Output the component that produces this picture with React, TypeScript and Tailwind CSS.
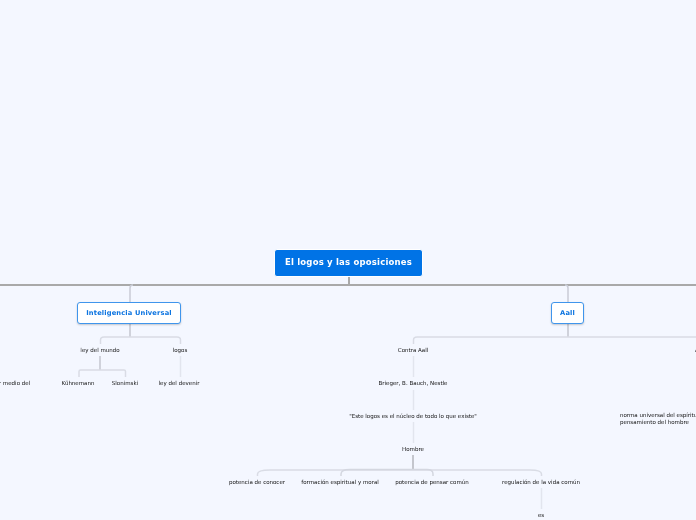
const font = "font-['DejaVu_Sans',Verdana,sans-serif]";

const labels = [
  { text: "ley del mundo", pos: "left-[100px] top-[350px]" },
  { text: "logos", pos: "left-[180px] top-[350px]" },
  { text: "Kühnemann", pos: "left-[78px] top-[383px]" },
  { text: "Slonimski", pos: "left-[125px] top-[383px]" },
  { text: "ley del devenir", pos: "left-[179px] top-[383px]" },
  { text: "Contra Aall", pos: "left-[412.5px] top-[350px]" },
  { text: "Brieger, B. Bauch, Nestle", pos: "left-[413px] top-[383px]" },
  { text: "\"Este logos es el núcleo de todo lo que existe\"", pos: "left-[413px] top-[416px]" },
  { text: "Hombre", pos: "left-[412.5px] top-[449px]" },
  { text: "potencia de conocer", pos: "left-[256.5px] top-[482px]" },
  { text: "formación espiritual y moral", pos: "left-[340px] top-[482px]" },
  { text: "potencia de pensar común", pos: "left-[432px] top-[482px]" },
  { text: "regulación de la vida común", pos: "left-[541px] top-[482px]" },
  { text: "es", pos: "left-[541px] top-[515px]" },
];

function Connectors() {
  return (
    <svg className="absolute inset-0" width="696" height="520" fill="none">
      {/* trunk */}
      <path d="M0 285H696" stroke="#a9a9a9" strokeWidth="2" />
      <path d="M349 276V285" stroke="#a9a9a9" strokeWidth="2" />
      {/* main branches */}
      <path d="M133 285Q130 285 130 288V303" stroke="#c9ccd6" strokeWidth="1.5" />
      <path d="M565 285Q568 285 568 288V303" stroke="#c9ccd6" strokeWidth="1.5" />
      <path d="M130 323V337M568 323V337M100 356V370" stroke="#c3c6d0" strokeWidth="1.5" />
      {/* Inteligencia Universal */}
      <path d="M100.5 344V340Q100.5 337 104 337H177Q180.5 337 180.5 340V344" stroke="#d9dce5" strokeWidth="1.5" />
      <path d="M79 377V371.5Q79 370 80.5 370H124Q125.5 370 125.5 371.5V377" stroke="#d9dce5" strokeWidth="1.5" />
      <path d="M180.5 356V377" stroke="#e2e5ee" strokeWidth="1.5" />
      {/* Aall */}
      <path d="M413.5 344V340Q413.5 337 417 337H696" stroke="#d9dce5" strokeWidth="1.5" />
      <path d="M413.5 356V377M413.5 390V410M413.5 422V443" stroke="#e2e5ee" strokeWidth="1.5" />
      <path d="M413 455V469" stroke="#b4b6bd" strokeWidth="1.5" />
      <path d="M257.5 476V474Q257.5 470 270 470H530Q541.5 470 541.5 474V476" stroke="#d9dce5" strokeWidth="1.5" />
      <path d="M341 476V474Q341 469.5 350 469.5H427Q433 469.5 433 474V476" stroke="#d4d7e0" strokeWidth="1.5" />
      <path d="M541.5 488V509" stroke="#e2e5ee" strokeWidth="1.5" />
    </svg>
  );
}

export default function App() {
  return (
    <div className={`relative w-[696px] h-[520px] overflow-hidden bg-[#f4f7ff] ${font}`}>
      <Connectors />

      <div className="absolute left-[274px] top-[249px] w-[149px] h-[27.5px] flex items-center justify-center rounded-[3px] border border-white bg-[#0073e6] text-[8.5px] tracking-[0.2px] font-bold text-white whitespace-nowrap [will-change:transform]">
        El logos y las oposiciones
      </div>

      <div className="absolute left-[77px] top-[302px] w-[104px] h-[21.5px] flex items-center justify-center rounded-[3px] border-[1.5px] border-[#3f95ec] bg-white text-[6.7px] tracking-[0.15px] font-bold text-[#0a73e0] whitespace-nowrap shadow-[0_1px_2px_rgba(0,0,0,0.2)] [will-change:transform]">
        Inteligencia Universal
      </div>
      <div className="absolute left-[551px] top-[302px] w-[33px] h-[21.5px] flex items-center justify-center rounded-[3px] border-[1.5px] border-[#3f95ec] bg-white text-[6.7px] tracking-[0.15px] font-bold text-[#0a73e0] whitespace-nowrap shadow-[0_1px_2px_rgba(0,0,0,0.2)] [will-change:transform]">
        Aall
      </div>

      {labels.map((l) => (
        <div
          key={l.text}
          className={`absolute ${l.pos} -translate-x-1/2 -translate-y-1/2 text-[5.5px] leading-[6.5px] text-[#111] whitespace-nowrap [will-change:transform]`}
        >
          {l.text}
        </div>
      ))}

      <div className="absolute right-[666px] top-[383px] -translate-y-1/2 text-[5.5px] leading-[6.5px] text-[#111] whitespace-nowrap [will-change:transform]">
        por medio del
      </div>
      <div className="absolute left-[694.5px] top-[350px] -translate-y-1/2 text-[5.5px] leading-[6.5px] text-[#111] whitespace-nowrap [will-change:transform]">
        Aall
      </div>
      <div className="absolute left-[620px] top-[412px] text-[5.5px] leading-[6.5px] text-[#111] whitespace-nowrap [will-change:transform]">
        norma universal del espíritu y
        <br />
        pensamiento del hombre
      </div>
    </div>
  );
}
